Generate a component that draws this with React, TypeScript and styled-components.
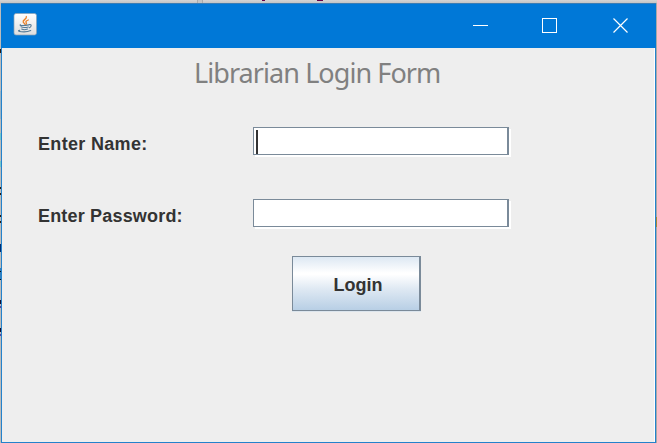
import React from "react";
import styled, { createGlobalStyle } from "styled-components";

const GlobalStyle = createGlobalStyle`
  * { box-sizing: border-box; }
  body { margin: 0; overflow: hidden; }
`;

const Desktop = styled.div`
  width: 657px;
  height: 443px;
  display: grid;
  grid-template-rows: 3px 440px;
  background: #c3c3c3;
`;

const TopStrip = styled.div`
  background:
    linear-gradient(#650048, #650048) 262px 0 / 3px 1px no-repeat,
    linear-gradient(#650048, #650048) 317px 0 / 6px 1px no-repeat,
    linear-gradient(90deg, #aaa 1px, #c4c4c4 1px 5px, #aaa 5px 6px) 197px 0 / 6px 3px no-repeat,
    linear-gradient(#d4d4d4, #c4c4c4);
`;

const Row = styled.div`
  display: grid;
  grid-template-columns: 1px 655px 1px;
`;

/* One-pixel sliver of whatever lies behind the window */
const Sliver = styled.div<{ $marks: string }>`
  background: ${(p) => p.$marks};
`;

const Window = styled.section`
  display: flex;
  flex-direction: column;
  border: 1px solid #2482cb;
  border-top-color: #3a7db5;
  background: #eeeeee;
`;

const TitleBar = styled.header`
  height: 44px;
  flex: none;
  margin: 0 -1px;
  padding: 0 27px 0 12px;
  display: flex;
  align-items: flex-start;
  justify-content: space-between;
  background: #0078d7;
`;

const AppIcon = styled.svg`
  width: 24px;
  height: 24px;
  margin-top: 8px;
`;

const Controls = styled.div`
  display: grid;
  grid-template-columns: 69px 71px 16px;
  margin-top: 14px;
`;

const ControlButton = styled.button`
  width: 16px;
  height: 16px;
  padding: 0;
  border: 0;
  background: none;
  color: #fff;
  svg { display: block; }
`;

const Content = styled.main`
  flex: 1;
  border-right: 1px solid #fff;
`;

const Heading = styled.h1`
  margin: 0 0 0 192px;
  height: 79px;
  padding-top: 6px;
  font: 400 27px/38px "Noto Sans", sans-serif;
  letter-spacing: -0.93px;
  color: #808080;
  white-space: nowrap;
`;

const FormRow = styled.label`
  display: grid;
  grid-template-columns: 215px 258px;
  align-items: start;
  height: 72px;
  padding-left: 36px;
`;

const LabelText = styled.span<{ $tracking: number }>`
  padding-top: 6px;
  font: 700 18px/22px "Liberation Sans", Arial, sans-serif;
  letter-spacing: ${(p) => p.$tracking}px;
  color: #333;
`;

const Field = styled.span`
  display: block;
  width: 256px;
  height: 28px;
  padding: 2px;
  background: #fff;
  border: 1px solid #7a8a99;
  border-right-width: 2px;
  box-shadow: 2px 2px 0 #fff;
`;

const Caret = styled.i`
  display: block;
  width: 2px;
  height: 24px;
  background: #333;
`;

const LoginButton = styled.button`
  display: block;
  width: 129px;
  height: 55px;
  margin: -15px 0 0 290px;
  padding: 3px 0 0 4px;
  border: 1px solid #7a8a99;
  border-right-width: 2px;
  border-radius: 0;
  background: linear-gradient(#dde8f3 0%, #fff 30%, #fff 33%, #dfe9f3 60%, #b8cfe5 100%);
  box-shadow: 0 1px 0 #dce5ed;
  font: 700 18px/22px "Liberation Sans", Arial, sans-serif;
  color: #333;
`;

const JavaIcon = () => (
  <AppIcon viewBox="0 0 24 24" fill="none" strokeLinecap="round">
    <defs>
      <linearGradient id="tile" x1="0" y1="0" x2="0" y2="1">
        <stop offset="0" stopColor="#fff" />
        <stop offset="1" stopColor="#dedede" />
      </linearGradient>
    </defs>
    <rect x="1" y="1.5" width="22.5" height="21.5" rx="2" fill="url(#tile)" stroke="#8aa2b6" strokeWidth=".7" />
    <path d="M13.3 4.5c1 2.6-3.9 3.5-3.1 5.4.3.8 1.3 1.5 1.7 2.3M15.3 8c-2.2.8-3 1.6-2 2.9.4.6.2 1-.3 1.5" stroke="#ec8127" strokeWidth="1.3" />
    <path d="M7.5 12.7c-2 .9 2.8 1.3 8.3.2M8 14.8c1.5.8 5 .8 7.3.2M8.7 17c1.3.8 4 .8 5.8.1M16.4 12.6c2.3-.6 2.4 2 0 3.2M6.7 18.2c-4.8 1.2 5.8 2.8 11 .4" stroke="#557b98" strokeWidth="1.1" />
  </AppIcon>
);

const leftMarks = `
  linear-gradient(#9ab4c6, #9ab4c6) 0 88px / 1px 28px no-repeat,
  linear-gradient(#7fc0cc, #7fc0cc) 0 103px / 1px 6px no-repeat,
  linear-gradient(#72c8cc, #72c8cc) 0 130px / 1px 7px no-repeat,
  linear-gradient(#72c8cc, #72c8cc) 0 158px / 1px 6px no-repeat,
  linear-gradient(#29190f, #29190f) 0 46px / 1px 4px no-repeat,
  linear-gradient(#29190f, #29190f) 0 184px / 1px 2px no-repeat,
  linear-gradient(#29190f, #29190f) 0 190px / 1px 2px no-repeat,
  linear-gradient(#29190f, #29190f) 0 212px / 1px 2px no-repeat,
  linear-gradient(#29190f, #29190f) 0 218px / 1px 2px no-repeat,
  linear-gradient(#002b70, #002b70) 0 241px / 1px 8px no-repeat,
  linear-gradient(#00101f, #00101f) 0 268px / 1px 1px no-repeat,
  linear-gradient(#00101f, #00101f) 0 276px / 1px 1px no-repeat,
  linear-gradient(#347fbd, #347fbd) 0 265px / 1px 11px no-repeat,
  linear-gradient(#120c2c, #120c2c) 0 297px / 1px 4px no-repeat,
  linear-gradient(#5545a0, #5545a0) 0 303px / 1px 2px no-repeat,
  linear-gradient(#120c2c, #120c2c) 0 325px / 1px 4px no-repeat,
  linear-gradient(#5545a0, #5545a0) 0 331px / 1px 2px no-repeat,
  #bcbcbc`;

const rightMarks = "linear-gradient(#a38a36, #a38a36) 0 214px / 1px 10px no-repeat, #a8a8a8";

export default function App() {
  return (
    <>
      <GlobalStyle />
      <Desktop>
        <TopStrip />
        <Row>
          <Sliver $marks={leftMarks} />
          <Window>
            <TitleBar>
              <JavaIcon />
              <Controls>
                <ControlButton aria-label="Minimize">
                  <svg width="16" height="16" stroke="currentColor"><path d="M0 8.5h15" transform="translate(0 -1)" /></svg>
                </ControlButton>
                <ControlButton aria-label="Maximize">
                  <svg width="16" height="16" fill="none" stroke="currentColor"><rect x=".5" y=".5" width="14" height="14" /></svg>
                </ControlButton>
                <ControlButton aria-label="Close">
                  <svg width="16" height="16" stroke="currentColor" strokeWidth="1.2"><path d="M.5.5l14 14M14.5.5l-14 14" /></svg>
                </ControlButton>
              </Controls>
            </TitleBar>
            <Content>
              <Heading>Librarian Login Form</Heading>
              <FormRow>
                <LabelText $tracking={0.32}>Enter Name:</LabelText>
                <Field><Caret /></Field>
              </FormRow>
              <FormRow>
                <LabelText $tracking={0.18}>Enter Password:</LabelText>
                <Field />
              </FormRow>
              <LoginButton>Login</LoginButton>
            </Content>
          </Window>
          <Sliver $marks={rightMarks} />
        </Row>
      </Desktop>
    </>
  );
}
